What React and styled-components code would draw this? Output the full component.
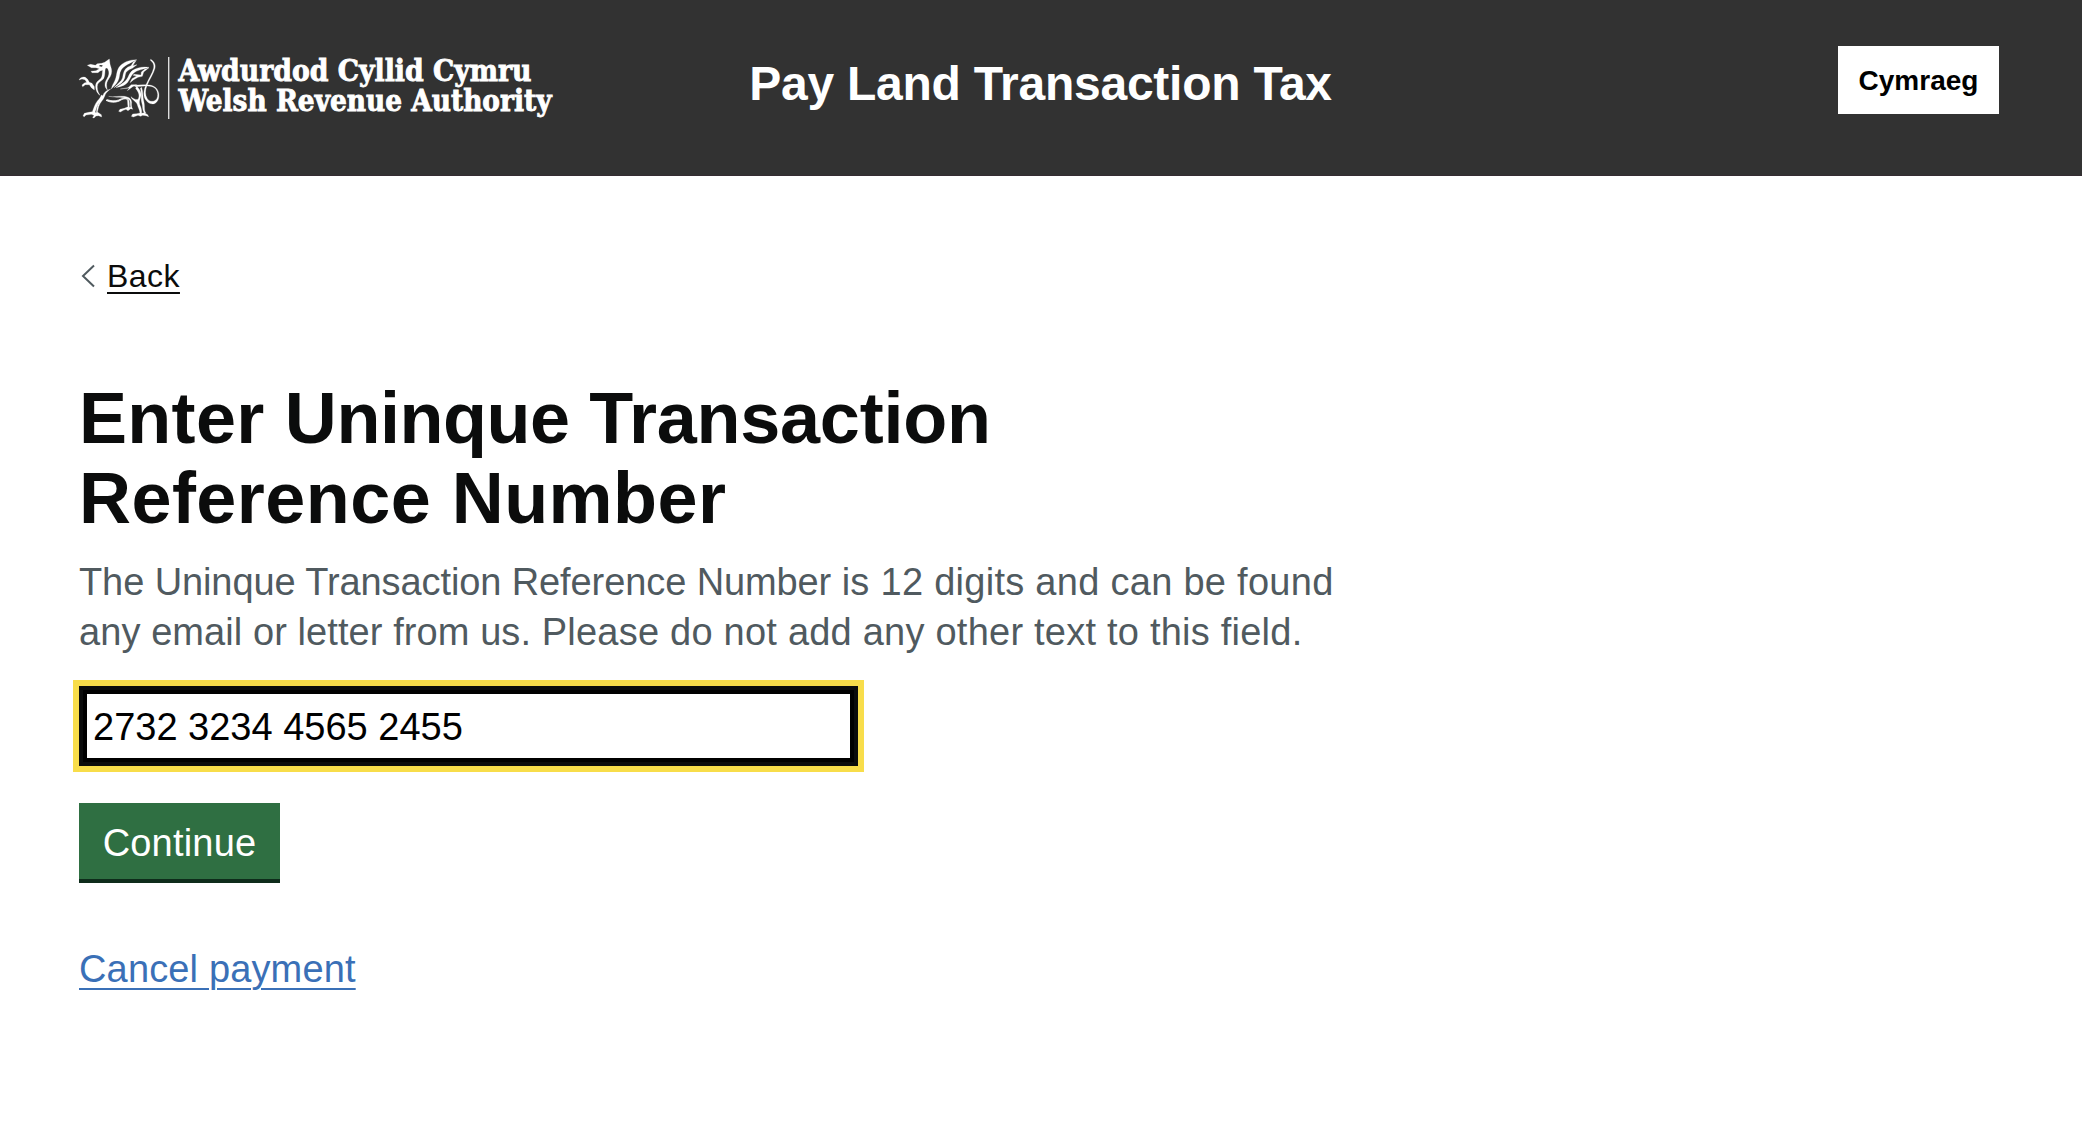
import React from "react";
import styled, { createGlobalStyle } from "styled-components";

const Global = createGlobalStyle`
  body { margin: 0; background: #fff; font-family: "Liberation Sans", Arial, sans-serif; color: #0b0c0c; }
`;

const Header = styled.header`
  box-sizing: border-box;
  height: 176px;
  padding: 46px 83px 0 79px;
  display: grid;
  grid-template-columns: 1fr auto 1fr;
  align-items: start;
  background: #323232;
  border-bottom: 1px solid #352c32;
`;

const Logo = styled.svg`
  display: block;
  width: 490px;
  height: 76px;
  margin: 4px 0 0 -9px;
`;

const ServiceName = styled.div`
  margin-top: 10px;
  padding-left: 3px;
  font-size: 48px;
  font-weight: 700;
  line-height: 56px;
  letter-spacing: -0.25px;
  color: #fff;
`;

const LanguageButton = styled.button`
  justify-self: end;
  width: 161px;
  height: 68px;
  padding: 2px 0 0;
  border: 0;
  background: #fff;
  color: #000;
  font: 700 28px/66px "Liberation Sans", Arial, sans-serif;
`;

const Main = styled.main`
  display: flex;
  flex-direction: column;
  align-items: flex-start;
  padding: 80px 79px 0;
`;

const BackLink = styled.a`
  display: flex;
  align-items: center;
  gap: 12px;
  padding-left: 2px;
  font-size: 32px;
  line-height: 40px;
  letter-spacing: 0.45px;
  color: #0b0c0c;

  span {
    text-decoration: underline;
    text-decoration-thickness: 2px;
    text-underline-offset: 5px;
  }
`;

const Chevron = styled.svg`
  width: 14px;
  height: 24px;
`;

const Line = styled.span`
  display: block;
  white-space: nowrap;
`;

const Tracked = styled.span`
  letter-spacing: ${(p) => p.$spacing}px;
`;

const Title = styled.h1`
  margin: 82px 0 0;
  font-size: 72px;
  line-height: 80px;
`;

const Hint = styled.p`
  margin: 19px 0 0;
  font-size: 38px;
  line-height: 50px;
  color: #505a5f;
`;

const ReferenceInput = styled.input`
  box-sizing: border-box;
  width: 779px;
  height: 80px;
  margin-top: 29px;
  padding: 2px 10px 0;
  border: 4px solid #0b0c0c;
  border-radius: 0;
  outline: 6px solid #f8dd4a;
  box-shadow: inset 0 0 0 4px #000;
  background: #fff;
  color: #000;
  font: 38px "Liberation Sans", Arial, sans-serif;
`;

const Continue = styled.button`
  width: 201px;
  height: 80px;
  margin-top: 37px;
  padding: 0;
  border: 0;
  background: #2f6f42;
  box-shadow: inset 0 -4px #0e2c1b;
  color: #fff;
  font: 38px/80px "Liberation Sans", Arial, sans-serif;
  letter-spacing: 0.2px;
`;

const CancelLink = styled.a`
  margin-top: 61px;
  font-size: 38px;
  line-height: 50px;
  letter-spacing: 0.15px;
  color: #3a70b7;
  text-decoration: underline;
  text-decoration-thickness: 2px;
  text-underline-offset: 6px;
`;

const Dragon = () => (
  <g fill="#fff" stroke="#fff" strokeWidth="0.8" strokeLinejoin="round">
    <path d="M52 46 L62 43 L76 46 L82 41 L95 40 L104 37 L118 27 L120 42 C121 48 125 54 125 64 C125 76 118 84 113 92 C109 99 109 108 112 120 L106 112 C103 102 106 94 111 86 C117 77 119 68 114 58 C112 54 108 53 106 56 C104 64 106 78 100 87 C95 93 86 96 83 103 C80 112 82 124 90 136 C80 130 76 117 77 106 C78 96 87 91 93 85 C98 78 96 68 98 61 L90 63 L84 68 L66 68 L63 64 L78 62 L88 56 L78 53 L64 53 Z" />
    <path d="M89 45 L98 46 L96 50 L88 49 Z" fill="#323232" stroke="none" />
    <path d="M27 90 C31 82 38 80 46 82 L53 88 L58 97 L66 100 L73 110 L73 120 L64 113 L58 104 L46 104 L38 110 L36 105 L43 99 L50 97 L45 89 L36 87 Z" />
    <path d="M122 117 C114 123 106 129 104 139 C100 151 90 157 86 170 L82 186 L94 194 L95 201 L86 197 L78 198 L72 204 L68 203 L72 196 L64 193 L48 195 L43 200 L39 198 L43 190 L56 187 L67 185 C71 176 74 163 82 153 C88 146 92 142 94 135 L99 138 C98 148 89 155 84 163 C79 172 78 180 75 187 L79 188 C80 178 81 168 87 160 C92 152 96 147 98 138 C101 127 111 120 122 117 Z" />
    <path d="M108 151 C120 158 136 158 148 153 C156 148 162 145 172 147 C163 143 154 146 146 150 C136 154 122 153 112 149 Z" strokeWidth="2.4" />
    <path d="M116 139 C132 142 148 137 163 139 C180 142 184 148 185 157 C184 164 184 170 188 178 L182 176 L174 182 L168 178 L160 181 L151 186 L146 184 L150 178 L163 175 L174 170 C172 162 174 154 171 148 L176 149 C179 157 178 164 178 172 L182 172 C180 164 182 156 179 151 C174 144 152 141 140 142 Z" />
    <path d="M200 108 C206 116 215 124 213 137 C211 146 206 153 209 163 C213 173 216 180 215 190 L223 188 L233 194 L236 200 L228 197 L218 196 L212 199 L204 196 L190 201 L184 199 L188 192 L200 191 L210 189 C209 179 204 173 202 164 C200 154 185 150 183 140 C191 147 202 152 205 146 C210 136 205 124 197 116 Z" />
    <path d="M215 112 C220 128 218 145 222 157 C225 169 221 180 228 190 L222 188 C216 177 219 168 215 157 C212 145 216 128 211 115 Z" />
    <path d="M242 28 C251 33 258 42 255 55 C251 71 238 89 231 107 C225 121 225 135 232 146 C239 156 252 157 260 147 C265 139 264 127 258 118 C251 109 240 107 225 108 L196 110 L190 106 C206 104 225 104 238 105 C252 107 262 114 266 128 C269 143 264 156 253 161 C241 164 229 156 224 144 C219 130 223 115 229 102 C237 84 247 70 251 54 C253 43 248 37 241 31 Z" />
    <path d="M200 29 C178 29 156 38 147 52 C138 66 141 80 134 93 C130 101 126 107 124 117 C131 108 139 103 144 93 C150 82 147 70 154 59 C162 46 180 40 200 29 Z" />
    <path d="M199 31 L188 47 L201 44 L187 55 C174 60 167 65 166 74 C165 88 158 98 147 104 L132 113 C142 101 155 95 158 82 C160 70 162 58 174 51 L183 47 L190 36 Z" />
    <path d="M237 52 C218 49 200 53 188 61 C177 69 176 82 168 91 C160 100 149 105 138 113 C152 109 163 108 172 98 C181 87 182 76 192 68 C202 60 217 59 237 52 Z" />
    <path d="M237 53 L221 66 L217 79 L204 82 L191 89 L180 98 L186 86 L200 78 L189 76 L192 73 L213 75 L214 66 L224 58 Z" />
    <path d="M151 117 L174 113 L184 104 L200 104 L188 110 L172 122 L178 114 Z" />
  </g>
);

export default function App() {
  return (
    <>
      <Global />
      <Header>
        <Logo viewBox="0 0 490 76">
          <g transform="scale(0.33333)"><Dragon /></g>
          <rect x="98" y="7" width="1.4" height="62" fill="#ddd" />
          <g fill="#fff" stroke="#fff" strokeWidth="0.8" fontFamily="'DejaVu Serif Condensed', 'DejaVu Serif', serif" fontWeight="700" fontSize="29.5">
            <text x="108.5" y="31" textLength="353" lengthAdjust="spacingAndGlyphs">Awdurdod Cyllid Cymru</text>
            <text x="108.5" y="61" textLength="373" lengthAdjust="spacingAndGlyphs">Welsh Revenue Authority</text>
          </g>
        </Logo>
        <ServiceName>Pay Land Transaction Tax</ServiceName>
        <LanguageButton>Cymraeg</LanguageButton>
      </Header>
      <Main>
        <BackLink>
          <Chevron viewBox="0 0 14 24" fill="none" stroke="#505a5f" strokeWidth="2">
            <path d="M13 1.5 L2 12 L13 22.5" />
          </Chevron>
          <span>Back</span>
        </BackLink>
        <Title>
          <Line>
            <Tracked $spacing={0.3}>Enter </Tracked>
            <Tracked $spacing={-0.45}>Uninque </Tracked>
            <Tracked $spacing={-0.25}>Transaction</Tracked>
          </Line>
          <Line>
            <Tracked $spacing={0.45}>Reference Number</Tracked>
          </Line>
        </Title>
        <Hint>
          <Line>
            <Tracked $spacing={-0.1}>The Uninque Transaction Reference Number </Tracked>
            <Tracked $spacing={0.28}>is 12 digits and can be found</Tracked>
          </Line>
          <Line>
            <Tracked $spacing={0.08}>any email or letter from us. </Tracked>
            <Tracked $spacing={0.23}>Please do not add any other text to this field.</Tracked>
          </Line>
        </Hint>
        <ReferenceInput defaultValue="2732 3234 4565 2455" />
        <Continue>Continue</Continue>
        <CancelLink>Cancel payment</CancelLink>
      </Main>
    </>
  );
}
